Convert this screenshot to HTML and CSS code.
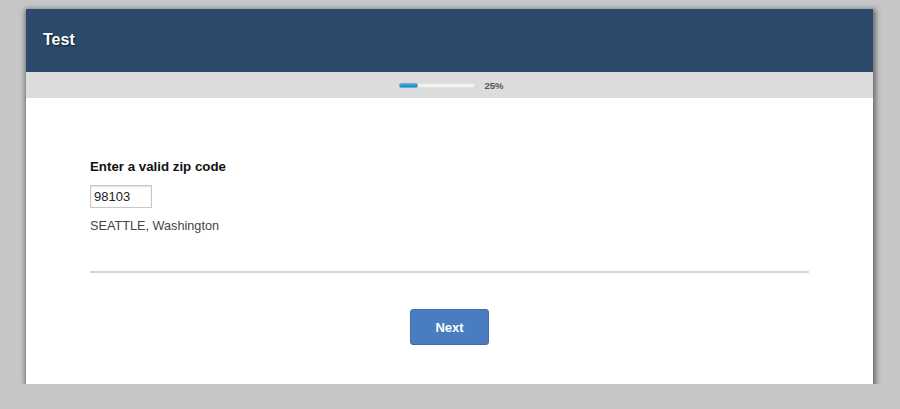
FILE: index.html
```html
<!doctype html>
<html lang="en">
<head>
  <meta charset="UTF-8" />
  <title>Test</title>
  <link rel="stylesheet" href="styles.css">
</head>
<body>
  <div class="survey">
    <header class="survey-header">
      <h1 class="survey-title">Test</h1>
    </header>

    <!-- Progress -->
    <div class="progress-row">
      <div class="progress-track">
        <div class="progress-fill" style="width: 25%"></div>
      </div>
      <span class="progress-text">25%</span>
    </div>

    <main class="survey-body">
      <div class="question">
        <label class="question-label" for="zip">Enter a valid zip code</label>
        <input type="text" id="zip" class="zip-input" value="98103">
        <p class="zip-result">SEATTLE, Washington</p>
      </div>
      <hr class="divider">
      <div class="actions">
        <button class="btn-next">Next</button>
      </div>
    </main>
  </div>
</body>
</html>
```

FILE: styles.css
```css
/* ------------------ Reset & Globals ------------------ */
* {
  margin: 0;
  padding: 0;
  box-sizing: border-box;
}
body {
  font-family: Arial, "Liberation Sans", Helvetica, sans-serif;
  background: #c6c6c6;
  color: #222;
  padding: 9px 27px 0 26px;
}

/* ------------------ Card ------------------ */
.survey {
  width: 847px;
  background: #fff;
  box-shadow: 1px 2px 5px 2px rgba(0, 0, 0, 0.45);
}
.survey-header {
  background: #2c4a6b;
  height: 63px;
  padding: 22px 17px 0;
}
.survey-title {
  color: #fff;
  font-size: 16px;
  font-weight: bold;
  text-shadow: 1px 1px 2px #0c1a2a;
}

/* ------------------ Progress ------------------ */
.progress-row {
  background: #dcdcdc;
  height: 26px;
  display: flex;
  align-items: center;
  justify-content: center;
  gap: 9px;
  padding-left: 4px;
}
.progress-track {
  width: 76px;
  height: 5px;
  background: #f2f2f2;
  border: 1px solid #e2e2e2;
  border-radius: 2px;
}
.progress-fill {
  height: 5px;
  margin-top: -1px;
  margin-left: -1px;
  background: linear-gradient(#3cb4ec, #0a86c8);
  border: 1px solid #7aa9c4;
  border-radius: 2px;
}
.progress-text {
  font-size: 9.5px;
  font-weight: bold;
  color: #555;
}

/* ------------------ Body ------------------ */
.survey-body {
  padding: 61px 64px 39px;
}
.question {
  display: flex;
  flex-direction: column;
  align-items: flex-start;
}
.question-label {
  font-size: 13.3px;
  font-weight: bold;
  color: #111;
}
.zip-input {
  margin-top: 11px;
  width: 62px;
  height: 23px;
  border: 1px solid #c8c8c8;
  box-shadow: inset 0 1px 2px rgba(0, 0, 0, 0.12);
  font-family: inherit;
  font-size: 13px;
  color: #222;
  padding: 0 3px;
}
.zip-result {
  margin-top: 11px;
  font-size: 12.7px;
  color: #444;
}
.divider {
  margin-top: 38px;
  border: none;
  height: 2px;
  background: #d6d6d6;
  width: 719px;
}
.actions {
  display: flex;
  justify-content: center;
  margin-top: 36px;
}
.btn-next {
  width: 79px;
  height: 36px;
  background: #4a7dbf;
  border: 1px solid #3f6faf;
  border-radius: 3px;
  color: #fff;
  font-family: inherit;
  font-size: 13px;
  font-weight: bold;
  cursor: pointer;
}
```
